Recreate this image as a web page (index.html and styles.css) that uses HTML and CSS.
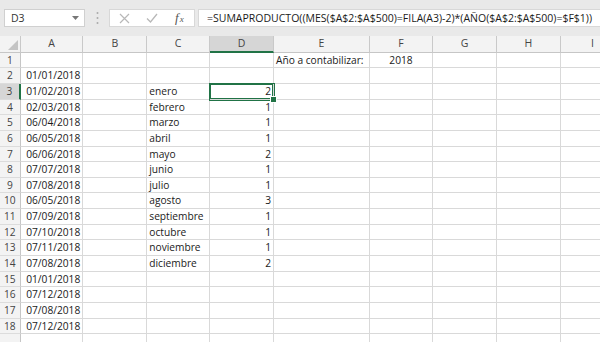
FILE: index.html
```html
<!DOCTYPE html>
<html>
  <head>
    <title>SUMAPRODUCTO</title>
    <link rel="stylesheet" href="styles.css">
  </head>
  <body>
    <div class="toolbar">
      <div class="namebox">
        <span>D3</span>
        <svg class="caret" width="7" height="4" viewBox="0 0 7 4"><path d="M0 0h7L3.5 4z" fill="#777"/></svg>
      </div>
      <div class="grip">
        <svg width="3" height="14" viewBox="0 0 3 14"><circle cx="1.5" cy="2" r="1" fill="#aaa"/><circle cx="1.5" cy="7" r="1" fill="#aaa"/><circle cx="1.5" cy="12" r="1" fill="#aaa"/></svg>
      </div>
      <div class="fnbox">
        <svg width="11" height="11" viewBox="0 0 11 11"><path d="M1 1l9 9M10 1l-9 9" stroke="#b8b8b8" stroke-width="1.2"/></svg>
        <svg width="12" height="10" viewBox="0 0 12 10"><path d="M1 5.5l3.5 3.5L11 1" stroke="#b8b8b8" stroke-width="1.3" fill="none"/></svg>
        <span class="fx">f<span class="fx-x">x</span></span>
      </div>
      <div class="formula">=SUMAPRODUCTO((MES($A$2:$A$500)=FILA(A3)-2)*(AÑO($A$2:$A$500)=$F$1))</div>
    </div>

    <div class="sheet">
      <div class="hd corner"><svg width="10" height="10" viewBox="0 0 10 10"><path d="M10 0v10H0z" fill="#c4c4c4"/></svg></div>
      <div class="hd">A</div><div class="hd">B</div><div class="hd">C</div><div class="hd active-col">D</div><div class="hd">E</div><div class="hd">F</div><div class="hd">G</div><div class="hd">H</div><div class="hd">I</div>

      <div class="rh">1</div><div class="c"></div><div class="c"></div><div class="c"></div><div class="c"></div><div class="c">Año a contabilizar:</div><div class="c mid">2018</div><div class="c"></div><div class="c"></div><div class="c"></div>
      <div class="rh">2</div><div class="c num">01/01/2018</div><div class="c"></div><div class="c"></div><div class="c"></div><div class="c"></div><div class="c"></div><div class="c"></div><div class="c"></div><div class="c"></div>
      <div class="rh active-row">3</div><div class="c num">01/02/2018</div><div class="c"></div><div class="c">enero</div><div class="c num sel">2</div><div class="c"></div><div class="c"></div><div class="c"></div><div class="c"></div><div class="c"></div>
      <div class="rh">4</div><div class="c num">02/03/2018</div><div class="c"></div><div class="c">febrero</div><div class="c num">1</div><div class="c"></div><div class="c"></div><div class="c"></div><div class="c"></div><div class="c"></div>
      <div class="rh">5</div><div class="c num">06/04/2018</div><div class="c"></div><div class="c">marzo</div><div class="c num">1</div><div class="c"></div><div class="c"></div><div class="c"></div><div class="c"></div><div class="c"></div>
      <div class="rh">6</div><div class="c num">06/05/2018</div><div class="c"></div><div class="c">abril</div><div class="c num">1</div><div class="c"></div><div class="c"></div><div class="c"></div><div class="c"></div><div class="c"></div>
      <div class="rh">7</div><div class="c num">06/06/2018</div><div class="c"></div><div class="c">mayo</div><div class="c num">2</div><div class="c"></div><div class="c"></div><div class="c"></div><div class="c"></div><div class="c"></div>
      <div class="rh">8</div><div class="c num">07/07/2018</div><div class="c"></div><div class="c">junio</div><div class="c num">1</div><div class="c"></div><div class="c"></div><div class="c"></div><div class="c"></div><div class="c"></div>
      <div class="rh">9</div><div class="c num">07/08/2018</div><div class="c"></div><div class="c">julio</div><div class="c num">1</div><div class="c"></div><div class="c"></div><div class="c"></div><div class="c"></div><div class="c"></div>
      <div class="rh">10</div><div class="c num">06/05/2018</div><div class="c"></div><div class="c">agosto</div><div class="c num">3</div><div class="c"></div><div class="c"></div><div class="c"></div><div class="c"></div><div class="c"></div>
      <div class="rh">11</div><div class="c num">07/09/2018</div><div class="c"></div><div class="c">septiembre</div><div class="c num">1</div><div class="c"></div><div class="c"></div><div class="c"></div><div class="c"></div><div class="c"></div>
      <div class="rh">12</div><div class="c num">07/10/2018</div><div class="c"></div><div class="c">octubre</div><div class="c num">1</div><div class="c"></div><div class="c"></div><div class="c"></div><div class="c"></div><div class="c"></div>
      <div class="rh">13</div><div class="c num">07/11/2018</div><div class="c"></div><div class="c">noviembre</div><div class="c num">1</div><div class="c"></div><div class="c"></div><div class="c"></div><div class="c"></div><div class="c"></div>
      <div class="rh">14</div><div class="c num">07/08/2018</div><div class="c"></div><div class="c">diciembre</div><div class="c num">2</div><div class="c"></div><div class="c"></div><div class="c"></div><div class="c"></div><div class="c"></div>
      <div class="rh">15</div><div class="c num">01/01/2018</div><div class="c"></div><div class="c"></div><div class="c"></div><div class="c"></div><div class="c"></div><div class="c"></div><div class="c"></div><div class="c"></div>
      <div class="rh">16</div><div class="c num">07/12/2018</div><div class="c"></div><div class="c"></div><div class="c"></div><div class="c"></div><div class="c"></div><div class="c"></div><div class="c"></div><div class="c"></div>
      <div class="rh">17</div><div class="c num">07/08/2018</div><div class="c"></div><div class="c"></div><div class="c"></div><div class="c"></div><div class="c"></div><div class="c"></div><div class="c"></div><div class="c"></div>
      <div class="rh">18</div><div class="c num">07/12/2018</div><div class="c"></div><div class="c"></div><div class="c"></div><div class="c"></div><div class="c"></div><div class="c"></div><div class="c"></div><div class="c"></div>
      <div class="rh"></div><div class="c"></div><div class="c"></div><div class="c"></div><div class="c"></div><div class="c"></div><div class="c"></div><div class="c"></div><div class="c"></div><div class="c"></div>
    </div>
  </body>
</html>
```

FILE: styles.css
```css
body {
  margin: 0;
  width: 600px;
  height: 342px;
  overflow: hidden;
  background-color: #fff;
  font-family: 'Open Sans', sans-serif;
  color: #1a1a1a;
}
.toolbar {
  height: 36px;
  background-color: #e9e9e9;
  display: flex;
  align-items: flex-start;
  padding-top: 9px;
  box-sizing: border-box;
}
.namebox {
  margin-left: 4px;
  width: 81px;
  height: 18px;
  background-color: #fff;
  border: 1px solid #d0d0d0;
  box-sizing: border-box;
  display: flex;
  align-items: center;
  justify-content: space-between;
  padding: 0 5px 0 6px;
  font-size: 10.5px;
  color: #333;
}
.grip {
  width: 24px;
  height: 18px;
  display: flex;
  align-items: center;
  justify-content: center;
}
.fnbox {
  width: 86px;
  height: 18px;
  background-color: #fff;
  border: 1px solid #d8d8d8;
  box-sizing: border-box;
  display: flex;
  align-items: center;
  padding-left: 9px;
  gap: 16px;
}
.fx {
  font-family: 'Liberation Serif', serif;
  font-style: italic;
  font-size: 13px;
  line-height: 16px;
  color: #555;
  margin-left: 1px;
}
.fx-x {
  font-size: 9px;
  margin-left: 1px;
}
.formula {
  margin-left: 3px;
  flex: 1;
  height: 18px;
  background-color: #fff;
  border: 1px solid #d8d8d8;
  border-right: 0;
  box-sizing: border-box;
  padding-left: 8px;
  font-size: 10.5px;
  line-height: 16px;
  white-space: nowrap;
  overflow: hidden;
}
.sheet {
  display: grid;
  grid-template-columns: 20.7px 62.6px 64px 62.7px 64px 96px 63px 64px 64px 64px;
  grid-template-rows: 16.7px;
  grid-auto-rows: 15.65px;
  font-size: 10.2px;
}
.sheet > div {
  box-sizing: border-box;
  border-right: 1px solid #d9d9d9;
  border-bottom: 1px solid #d9d9d9;
  white-space: nowrap;
  overflow: hidden;
  line-height: 14.6px;
}
.hd {
  background-color: #f3f3f3;
  color: #444;
  text-align: center;
  font-size: 10.5px;
  line-height: 15.7px !important;
  border-right-color: #c9c9c9 !important;
  border-bottom-color: #c6c6c6 !important;
}
.corner {
  display: flex;
  align-items: flex-end;
  justify-content: flex-end;
  padding: 0 2px 2px 0;
}
.rh {
  background-color: #f3f3f3;
  color: #444;
  text-align: center;
  border-right-color: #c6c6c6 !important;
  border-bottom-color: #dcdcdc !important;
}
.active-col {
  background-color: #d6d6d6;
  border-bottom: 2px solid #217346 !important;
}
.active-row {
  background-color: #d6d6d6;
  border-right: 2px solid #217346 !important;
}
.c {
  padding: 0 2px;
}
.num {
  text-align: right;
}
.mid {
  text-align: center;
}
.sheet > .sel {
  position: relative;
  overflow: visible;
  box-shadow: 0 0 0 1px #217346, inset 0 0 0 1px #217346;
}
.sel::after {
  content: '';
  position: absolute;
  right: -4px;
  bottom: -4px;
  width: 5px;
  height: 5px;
  background-color: #217346;
  border: 1px solid #fff;
}
```
